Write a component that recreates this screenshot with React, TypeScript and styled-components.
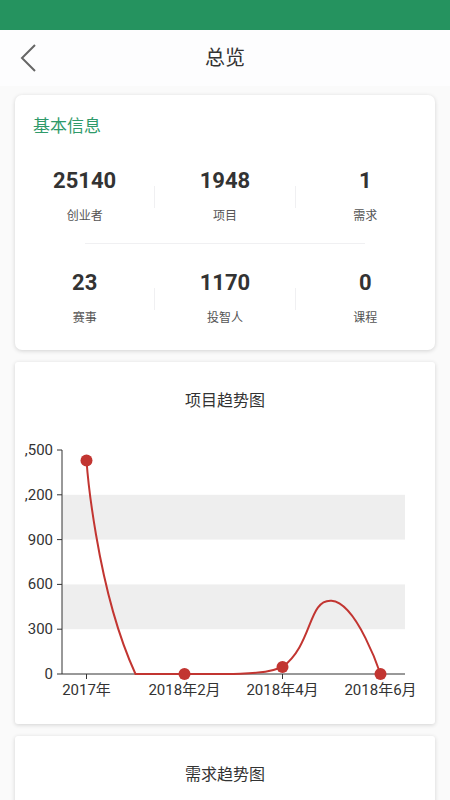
import React from 'react';
import styled, { createGlobalStyle } from 'styled-components';

const GlobalStyle = createGlobalStyle`
    html, body {
        margin: 0;
        padding: 0;
        background: #fafafa;
        font-family: Roboto, "Noto Sans CJK SC", sans-serif;
        color: #333;
    }
`;

const Page = styled.div`
    width: 450px;
    min-height: 800px;
    overflow: hidden;
`;

const StatusBar = styled.div`
    height: 30px;
    background: #25935f;
`;

const Header = styled.div`
    height: 56px;
    display: flex;
    align-items: center;
    justify-content: center;
    position: relative;
    background: #fdfdfe;
`;

const BackButton = styled.button`
    position: absolute;
    left: 14px;
    top: 10px;
    width: 28px;
    height: 36px;
    border: none;
    background: none;
    padding: 0;
    display: flex;
    align-items: center;
    justify-content: center;
`;

const HeaderTitle = styled.h1`
    margin: 0;
    font-size: 20px;
    font-weight: 400;
    color: #333;
    line-height: 28px;
`;

const Content = styled.div`
    display: flex;
    flex-direction: column;
    gap: 12px;
    padding: 9px 15px 0;
`;

const Card = styled.div<{ $radius: number }>`
    background: #fff;
    border-radius: ${p => p.$radius}px;
    box-shadow: 0 1px 4px rgba(0, 0, 0, 0.16);
`;

const InfoCard = styled(Card)`
    padding: 19px 0 23px;
`;

const InfoTitle = styled.div`
    margin-left: 18px;
    font-size: 17px;
    line-height: 24px;
    color: #2f9a6a;
`;

const StatRow = styled.div<{ $first?: boolean }>`
    display: grid;
    grid-template-columns: 1fr 1px 1fr 1px 1fr;
    margin-top: ${p => (p.$first ? 30 : 0)}px;
    padding: ${p => (p.$first ? '0 0 18px' : '26px 0 0')};
`;

const RowDivider = styled.div`
    height: 1px;
    margin: 0 70px;
    background: #f0f0f2;
`;

const ColDivider = styled.div`
    align-self: center;
    height: 22px;
    background: #f0f0f2;
`;

const Stat = styled.div`
    display: flex;
    flex-direction: column;
    align-items: center;
`;

const StatValue = styled.div`
    font-size: 22px;
    font-weight: 700;
    line-height: 26px;
    color: #333;
`;

const StatLabel = styled.div`
    margin-top: 13px;
    font-size: 12px;
    line-height: 18px;
    color: #555;
`;

const ChartCard = styled(Card)`
    padding: 28px 0 12px;
`;

const ChartTitle = styled.div`
    text-align: center;
    font-size: 16px;
    line-height: 22px;
    color: #333;
`;

const ChartSvg = styled.svg`
    display: block;
    width: 420px;
    height: 300px;
`;

type StatItem = { value: string; label: string };

const rows: StatItem[][] = [
    [
        { value: '25140', label: '创业者' },
        { value: '1948', label: '项目' },
        { value: '1', label: '需求' },
    ],
    [
        { value: '23', label: '赛事' },
        { value: '1170', label: '投智人' },
        { value: '0', label: '课程' },
    ],
];

const AXIS_X = 47;
const PLOT_RIGHT = 390;
const TOP = 38;
const BOTTOM = 262;
const RED = '#c23531';

type Pt = { x: number; y: number };

// smoothed line: control points from neighbours, kept inside the points' box
const smoothPath = (pts: Pt[], smooth = 0.5) => {
    const minY = Math.min(...pts.map(p => p.y));
    const maxY = Math.max(...pts.map(p => p.y));
    const minX = pts[0].x;
    const maxX = pts[pts.length - 1].x;
    const box = (p: Pt) => ({
        x: Math.min(Math.max(p.x, minX), maxX),
        y: Math.min(Math.max(p.y, minY), maxY),
    });
    const cps: Pt[] = [];
    pts.forEach((p, i) => {
        if (i === 0 || i === pts.length - 1) {
            cps.push({ ...p }, { ...p });
            return;
        }
        const prev = pts[i - 1];
        const next = pts[i + 1];
        const vx = (next.x - prev.x) * smooth;
        const vy = (next.y - prev.y) * smooth;
        let d0 = Math.hypot(p.x - prev.x, p.y - prev.y);
        let d1 = Math.hypot(next.x - p.x, next.y - p.y);
        const sum = d0 + d1;
        d0 /= sum;
        d1 /= sum;
        cps.push(box({ x: p.x - vx * d0, y: p.y - vy * d0 }), box({ x: p.x + vx * d1, y: p.y + vy * d1 }));
    });
    let d = `M${pts[0].x},${pts[0].y}`;
    for (let i = 1; i < pts.length; i++) {
        const c0 = cps[(i - 1) * 2 + 1];
        const c1 = cps[i * 2];
        d += ` C${c0.x},${c0.y} ${c1.x},${c1.y} ${pts[i].x},${pts[i].y}`;
    }
    return d;
};

type ChartProps = {
    data: number[];
    max: number;
    step: number;
    tickLabels: string[];
    categories: string[];
};

const TrendChart = ({ data, max, step, tickLabels, categories }: ChartProps) => {
    const band = (PLOT_RIGHT - AXIS_X) / data.length;
    const toY = (v: number) => BOTTOM - (v / max) * (BOTTOM - TOP);
    const pts = data.map((v, i) => ({ x: AXIS_X + band * (i + 0.5), y: toY(v) }));
    const ticks = tickLabels.map((t, i) => ({ label: t, y: toY(max - i * step) }));

    return (
        <ChartSvg viewBox="0 0 420 300">
            {ticks.slice(0, -1).map((t, i) =>
                i % 2 === 1 ? (
                    <rect key={t.label} x={AXIS_X} y={t.y} width={PLOT_RIGHT - AXIS_X} height={ticks[i + 1].y - t.y} fill="#eeeeee" />
                ) : null
            )}
            <line x1={AXIS_X} y1={TOP} x2={AXIS_X} y2={BOTTOM} stroke="#333" strokeWidth="1" />
            <line x1={AXIS_X} y1={BOTTOM} x2={PLOT_RIGHT} y2={BOTTOM} stroke="#333" strokeWidth="1" />
            {ticks.map(t => (
                <g key={t.label}>
                    <line x1={AXIS_X - 5} y1={t.y} x2={AXIS_X} y2={t.y} stroke="#333" />
                    <text x={AXIS_X - 9} y={t.y + 5} textAnchor="end" fontSize="15" fill="#333" fontFamily="Roboto, sans-serif">
                        {t.label}
                    </text>
                </g>
            ))}
            {pts.map((p, i) =>
                i % 2 === 0 ? (
                    <g key={i}>
                        <line x1={p.x} y1={BOTTOM} x2={p.x} y2={BOTTOM + 5} stroke="#333" />
                        <text x={p.x} y={BOTTOM + 21} textAnchor="middle" fontSize="15" fill="#333" fontFamily='Roboto, "Noto Sans CJK SC", sans-serif'>
                            {categories[i / 2]}
                        </text>
                    </g>
                ) : null
            )}
            <path d={smoothPath(pts)} fill="none" stroke={RED} strokeWidth="2" />
            {pts.map((p, i) => (i % 2 === 0 ? <circle key={i} cx={p.x} cy={p.y} r="6" fill={RED} /> : null))}
        </ChartSvg>
    );
};

const BackIcon = () => (
    <svg width="18" height="30" viewBox="0 0 18 30">
        <polyline points="16,2 3,15 16,28" fill="none" stroke="#666" strokeWidth="2" />
    </svg>
);

const App = () => (
    <Page>
        <GlobalStyle />
        <StatusBar />
        <Header>
            <BackButton>
                <BackIcon />
            </BackButton>
            <HeaderTitle>总览</HeaderTitle>
        </Header>
        <Content>
            <InfoCard $radius={7}>
                <InfoTitle>基本信息</InfoTitle>
                {rows.map((row, r) => (
                    <React.Fragment key={r}>
                        {r > 0 && <RowDivider />}
                        <StatRow $first={r === 0}>
                            {row.map((s, i) => (
                                <React.Fragment key={s.label}>
                                    {i > 0 && <ColDivider />}
                                    <Stat>
                                        <StatValue>{s.value}</StatValue>
                                        <StatLabel>{s.label}</StatLabel>
                                    </Stat>
                                </React.Fragment>
                            ))}
                        </StatRow>
                    </React.Fragment>
                ))}
            </InfoCard>
            <ChartCard $radius={3}>
                <ChartTitle>项目趋势图</ChartTitle>
                <TrendChart
                    data={[1430, 0, 0, 0, 47, 490, 0]}
                    max={1500}
                    step={300}
                    tickLabels={[',500', ',200', '900', '600', '300', '0']}
                    categories={['2017年', '2018年2月', '2018年4月', '2018年6月']}
                />
            </ChartCard>
            <ChartCard $radius={3}>
                <ChartTitle>需求趋势图</ChartTitle>
                <TrendChart
                    data={[0, 0, 0, 0, 0, 1, 0]}
                    max={1}
                    step={0.2}
                    tickLabels={['1', '0.8', '0.6', '0.4', '0.2', '0']}
                    categories={['2017年', '2018年2月', '2018年4月', '2018年6月']}
                />
            </ChartCard>
        </Content>
    </Page>
);

export default App;
